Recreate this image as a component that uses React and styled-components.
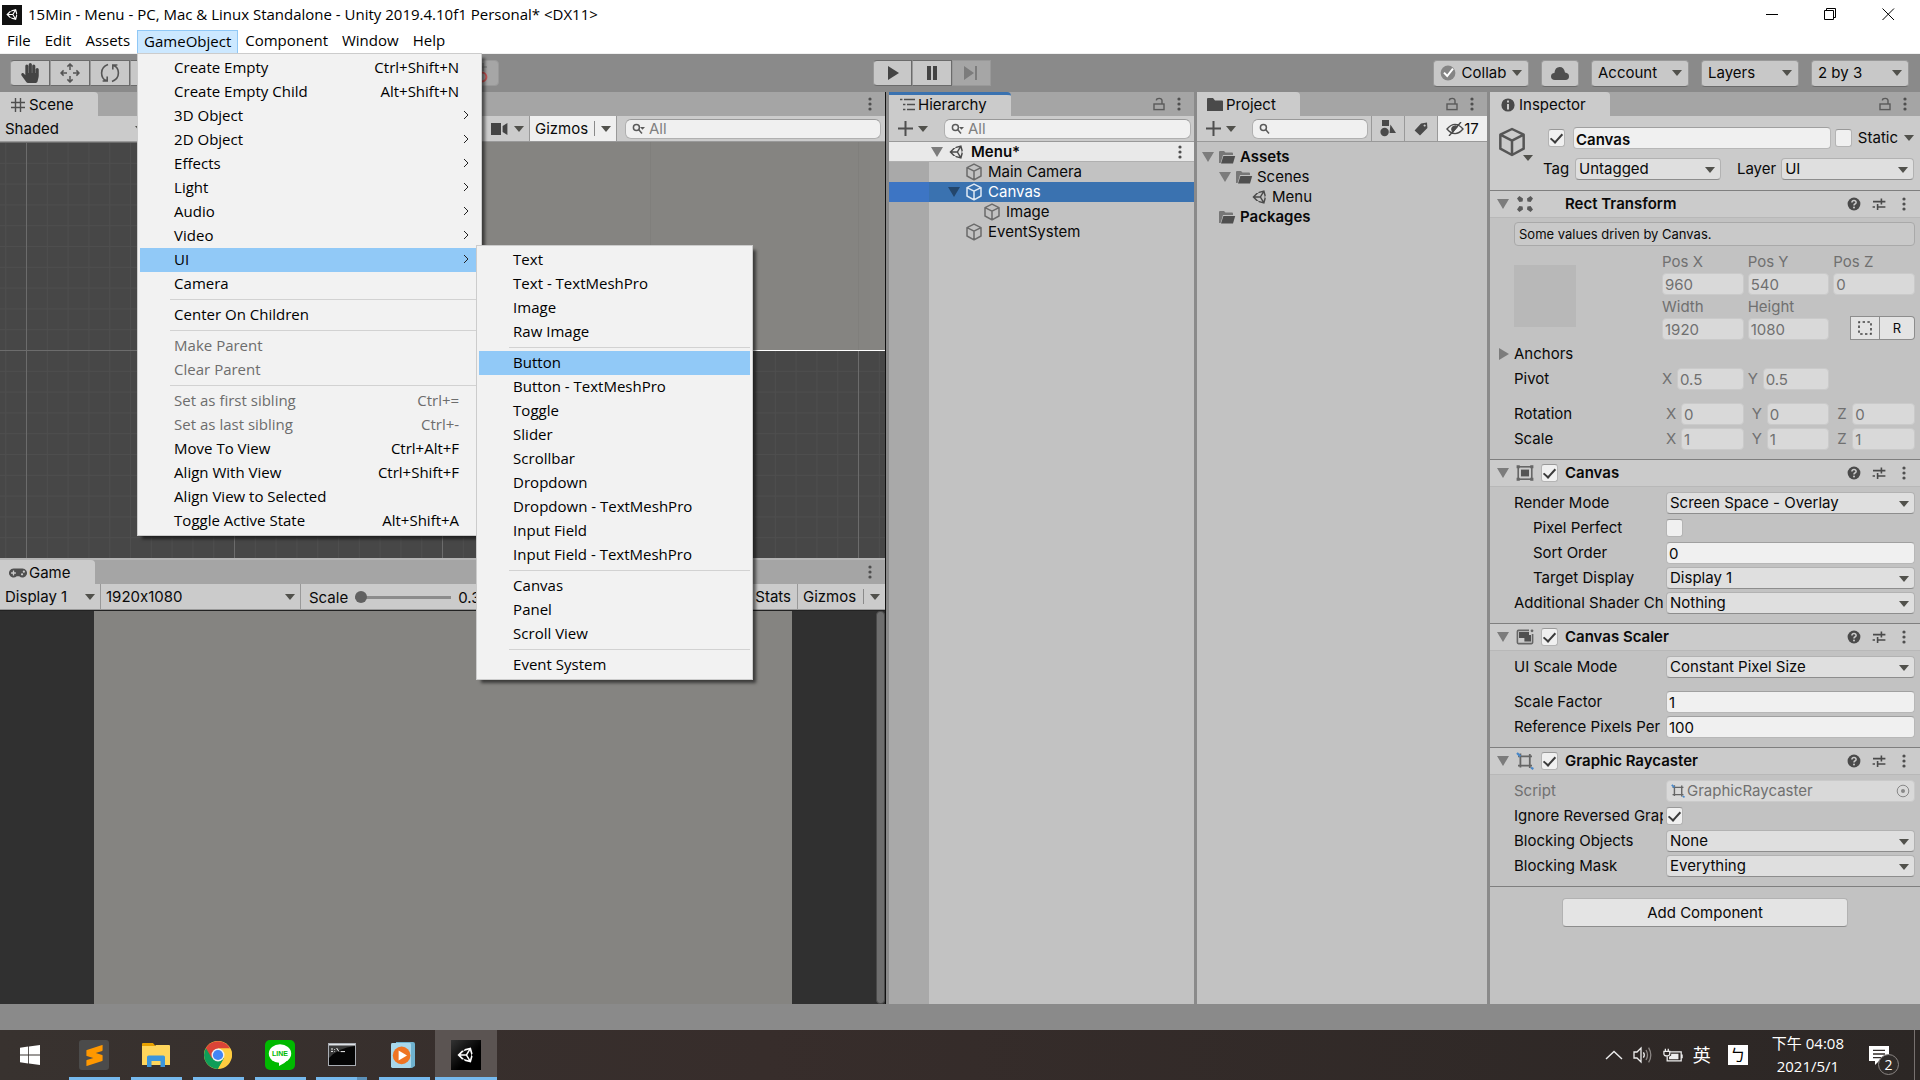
import React from 'react';
import styled, { createGlobalStyle, css } from 'styled-components';
import { FaUnity, FaHandPaper, FaGamepad } from 'react-icons/fa';
import { SiSublimetext } from 'react-icons/si';

const hierarchyRows = [
    { name: 'Main Camera', depth: 0 },
    { name: 'Canvas', depth: 0, open: true, selected: true },
    { name: 'Image', depth: 1 },
    { name: 'EventSystem', depth: 0 },
];

const gameObjectMenu = [
    { label: 'Create Empty', keys: 'Ctrl+Shift+N' },
    { label: 'Create Empty Child', keys: 'Alt+Shift+N' },
    { label: '3D Object', sub: true },
    { label: '2D Object', sub: true },
    { label: 'Effects', sub: true },
    { label: 'Light', sub: true },
    { label: 'Audio', sub: true },
    { label: 'Video', sub: true },
    { label: 'UI', sub: true, active: true },
    { label: 'Camera' },
    null,
    { label: 'Center On Children' },
    null,
    { label: 'Make Parent', disabled: true },
    { label: 'Clear Parent', disabled: true },
    null,
    { label: 'Set as first sibling', keys: 'Ctrl+=', disabled: true },
    { label: 'Set as last sibling', keys: 'Ctrl+-', disabled: true },
    { label: 'Move To View', keys: 'Ctrl+Alt+F' },
    { label: 'Align With View', keys: 'Ctrl+Shift+F' },
    { label: 'Align View to Selected' },
    { label: 'Toggle Active State', keys: 'Alt+Shift+A' },
];

const uiMenu = [
    'Text', 'Text - TextMeshPro', 'Image', 'Raw Image', null,
    'Button', 'Button - TextMeshPro', 'Toggle', 'Slider', 'Scrollbar', 'Dropdown',
    'Dropdown - TextMeshPro', 'Input Field', 'Input Field - TextMeshPro', null,
    'Canvas', 'Panel', 'Scroll View', null,
    'Event System',
];

/* ---------- icons ---------- */

const CubeIcon = ({ size = 18, color = '#6b6b6b' }) => (
    <svg width={size} height={size} viewBox="0 0 18 18" fill="none" stroke={color} strokeWidth="1.5" strokeLinejoin="round">
        <path d="M9 1.2 16 4.6V13L9 16.8 2 13V4.6ZM2 4.6 9 8.2 16 4.6M9 8.2V16.8" />
    </svg>
);

const FolderIcon = () => (
    <svg width="18" height="16" viewBox="0 0 18 16">
        <path d="M1 14V3q0-1 1-1h4l1.5 1.5H14q1 0 1 1V6H5L2.6 14Z" fill="#777" />
        <path d="M5.4 7H17.2L15 14.4H3Z" fill="#4f4f4f" />
    </svg>
);

const DotsIcon = () => (
    <svg width="4" height="14" viewBox="0 0 4 14" fill="#4f4f4f">
        <circle cx="2" cy="2" r="1.6" /><circle cx="2" cy="7" r="1.6" /><circle cx="2" cy="12" r="1.6" />
    </svg>
);

const LockIcon = () => (
    <svg width="12" height="14" viewBox="0 0 12 14" fill="none" stroke="#5a5a5a" strokeWidth="1.4">
        <rect x="1" y="7" width="10" height="5.6" />
        <path d="M9 7V3.6Q9 1.4 6.2 1.4T3.4 3.4" />
    </svg>
);

const SearchIcon = ({ menu }) => (
    <svg width="14" height="12" viewBox="0 0 14 12" fill="none" stroke="#5a5a5a" strokeWidth="1.5">
        <circle cx="4.4" cy="4.4" r="3" />
        <path d="M6.6 6.6 10 10.4" />
        {menu && <path d="M8 4h5L10.5 6.8Z" fill="#5a5a5a" stroke="none" />}
    </svg>
);

const PlusIcon = () => (
    <svg width="15" height="15" viewBox="0 0 15 15" stroke="#4f4f4f" strokeWidth="2">
        <path d="M7.5 0V15M0 7.5H15" />
    </svg>
);

const MoveIcon = () => (
    <svg width="20" height="20" viewBox="0 0 20 20" fill="none" stroke="#555" strokeWidth="1.5">
        <path d="M10 1V7M10 13V19M1 10H7M13 10H19M7.4 3.6 10 1 12.6 3.6M7.4 16.4 10 19 12.6 16.4M3.6 7.4 1 10 3.6 12.6M16.4 7.4 19 10 16.4 12.6" />
    </svg>
);

const RotateIcon = () => (
    <svg width="20" height="20" viewBox="0 0 20 20" fill="none" stroke="#555" strokeWidth="1.6">
        <path d="M8 1.6Q1.6 4 1.6 10T6.4 17.6M2.6 18H7.2V13.4M12 18.4Q18.4 16 18.4 10T13.6 2.4M17.4 2H12.8V6.6" />
    </svg>
);

const HelpIcon = () => (
    <svg width="14" height="14" viewBox="0 0 14 14">
        <circle cx="7" cy="7" r="6.4" fill="#4a4a4a" />
        <path d="M4.9 5.5Q5 3.6 7 3.6T9.1 5.4Q9.1 6.4 7.9 7 7 7.5 7 8.4" fill="none" stroke="#cbcbcb" strokeWidth="1.5" />
        <circle cx="7" cy="10.5" r="1" fill="#cbcbcb" />
    </svg>
);

const PresetIcon = () => (
    <svg width="14" height="14" viewBox="0 0 14 14" stroke="#4a4a4a" strokeWidth="1.6">
        <path d="M1 4.6H9M9.4 1.4V7.6M9.4 4.6H13.4M0.6 10H3M5.6 7V13M5.6 10H13.4" />
    </svg>
);

const RectTransformIcon = () => (
    <svg width="18" height="18" viewBox="0 0 18 18" fill="#5a5a5a">
        <path d="M1 3.4 3.4 1 7 3.4 6.6 6.6 3.4 7ZM17 3.4 14.6 1 11 3.4 11.4 6.6 14.6 7ZM1 14.6 3.4 17 7 14.6 6.6 11.4 3.4 11ZM17 14.6 14.6 17 11 14.6 11.4 11.4 14.6 11Z" />
    </svg>
);

const CanvasIcon = () => (
    <svg width="18" height="16" viewBox="0 0 18 16" fill="none" stroke="#666" strokeWidth="1.6">
        <rect x="2.2" y="1.8" width="13.6" height="12.4" />
        <rect x="5" y="4.6" width="8" height="6.8" fill="#555" stroke="none" />
        <path d="M0.6 1.8h3.2M14.2 1.8h3.2M0.6 14.2h3.2M14.2 14.2h3.2" strokeWidth="3" />
    </svg>
);

const ScalerIcon = () => (
    <svg width="18" height="16" viewBox="0 0 18 16">
        <path d="M13 1.4H2.4q-1 0-1 1V13.6q0 1 1 1H15.6q1 0 1-1V5" fill="none" stroke="#666" strokeWidth="1.6" />
        <path d="M3 3H13V6H15V12.6H8.4V9H3Z" fill="#4f4f4f" />
        <circle cx="16" cy="1.8" r="1.4" fill="#666" />
    </svg>
);

const RaycasterIcon = ({ size = 18 }) => (
    <svg width={size} height={size} viewBox="0 0 18 18" fill="none" stroke="#666" strokeWidth="1.8">
        <path d="M4.4 1.6V15.4M13.8 2V16M2 4.4H16M2 13.6H16" />
        <path d="M1 1 4.4 4.4M15 15.6 17.4 17" stroke="#4a88c8" strokeWidth="2.2" />
    </svg>
);

const UnityMark = ({ size = 16, color = '#4a4a4a' }) => <FaUnity size={size} color={color} />;

/* ---------- shared parts ---------- */

const Select = ({ id, value, grow }) => (
    <SelectBox $grow={grow}>
        <select id={id} defaultValue={value}>
            <option>{value}</option>
        </select>
    </SelectBox>
);

const TabBar = ({ icon, title, focused, lock }) => (
    <Tabs>
        <Tab $focused={focused}><TabIcon>{icon}</TabIcon>{title}</Tab>
        <TabTools>
            {lock && <LockIcon />}
            <DotsIcon />
        </TabTools>
    </Tabs>
);

const Component = ({ icon, title, toggle, children }) => (
    <section>
        <ComponentHeader>
            <Triangle $big $dim />
            <IconSlot>{icon}</IconSlot>
            <CheckSlot>
                {toggle && <CheckBox type="checkbox" defaultChecked aria-label={title} />}
            </CheckSlot>
            <ComponentTitle>{title}</ComponentTitle>
            <HeaderTools>
                <HelpIcon />
                <PresetIcon />
                <DotsIcon />
            </HeaderTools>
        </ComponentHeader>
        <ComponentBody>{children}</ComponentBody>
    </section>
);

const Property = ({ id, label, indent, muted, gap, children }) => (
    <PropertyRow $gap={gap}>
        <PropertyLabel htmlFor={id} $indent={indent} $muted={muted}>{label}</PropertyLabel>
        {children}
    </PropertyRow>
);

const RectField = ({ label, value }) => (
    <RectLabel>
        <span>{label}</span>
        <TextField disabled defaultValue={value} />
    </RectLabel>
);

const VectorRow = ({ label, axes, value, wide, gap }) => (
    <VectorGrid $gap={gap}>
        <span>{label}</span>
        {axes.map(axis => (
            <AxisField key={axis} $wide={wide}>
                {axis}
                <TextField disabled defaultValue={value} />
            </AxisField>
        ))}
    </VectorGrid>
);

const GameObjectMenu = () => (
    <Menu $main>
        {gameObjectMenu.map((item, i) => item === null ? <MenuLine key={i} /> : (
            <MenuCell key={item.label}>
                <MenuItem disabled={item.disabled} $active={item.active}>
                    {item.label}
                    {item.keys && <span>{item.keys}</span>}
                    {item.sub && (
                        <MenuArrow viewBox="0 0 6 10"><path d="M1 1 5 5 1 9" /></MenuArrow>
                    )}
                </MenuItem>
                {item.active && (
                    <Menu>
                        {uiMenu.map((name, n) => name === null ? <MenuLine key={n} /> : (
                            <MenuItem key={name} $active={name === 'Button'}>{name}</MenuItem>
                        ))}
                    </Menu>
                )}
            </MenuCell>
        ))}
    </Menu>
);

/* ---------- panels ---------- */

const ScenePanel = () => (
    <Panel>
        <TabBar title="Scene" icon={
            <svg width="14" height="14" viewBox="0 0 14 14" stroke="#4f4f4f" strokeWidth="1.4"><path d="M4.5 0V14M9.5 0V14M0 4.5H14M0 9.5H14" /></svg>
        } />
        <Toolbar>
            <ToolbarDrop $width="150px">Shaded<Triangle /></ToolbarDrop>
            <Spacer />
            <ToolbarDrop $width="43px">
                <svg width="17" height="12" viewBox="0 0 17 12" fill="#444"><path d="M0 0H10V12H0ZM11.6 3 16.4 0V12L11.6 9Z" /></svg>
                <Triangle />
            </ToolbarDrop>
            <GizmosButton $on>Gizmos<Split><Triangle /></Split></GizmosButton>
            <SceneSearch><SearchIcon menu /><input placeholder="All" aria-label="Search scene" /></SceneSearch>
        </Toolbar>
        <SceneView>
            <svg width="100%" height="100%">
                <defs>
                    <pattern id="minor" x="26" y="0" width="20.8" height="20.8" patternUnits="userSpaceOnUse">
                        <path d="M0.5 0V20.8M0 0.5H20.8" stroke="#4e4e4e" />
                    </pattern>
                    <pattern id="major" x="26" y="0" width="208" height="208" patternUnits="userSpaceOnUse">
                        <path d="M0.5 0V208M0 0.5H208" stroke="#6c6c6c" />
                    </pattern>
                </defs>
                <rect width="100%" height="100%" fill="url(#minor)" />
                <rect width="100%" height="100%" fill="url(#major)" />
                <rect x="234" width="100%" height="208" fill="#858481" />
                <path d="M650.5 0V208M858.5 0V208" stroke="#807f7c" />
                <path d="M234 208.5H4000" stroke="#fff" />
            </svg>
        </SceneView>
    </Panel>
);

const GamePanel = () => (
    <Panel>
        <TabBar title="Game" icon={<FaGamepad size={18} color="#4f4f4f" />} />
        <Toolbar>
            <ToolbarDrop $width="101px" $line>Display 1<Triangle /></ToolbarDrop>
            <ToolbarDrop $width="200px" $line>1920x1080<Triangle /></ToolbarDrop>
            <ScaleLabel>Scale<ScaleRange type="range" min="0" max="100" defaultValue="0" />0.36x</ScaleLabel>
            <Spacer />
            <StatsButton>Stats</StatsButton>
            <GizmosButton>Gizmos<Split><Triangle /></Split></GizmosButton>
        </Toolbar>
        <GameView>
            <GameImage />
            <GameScroll />
        </GameView>
    </Panel>
);

const HierarchyPanel = () => (
    <Panel>
        <TabBar focused lock title="Hierarchy" icon={
            <svg width="15" height="13" viewBox="0 0 15 13" stroke="#4f4f4f" strokeWidth="1.4"><path d="M0 1.5H2.4M4 1.5H15M3 6.5H5.4M7 6.5H15M3 11.5H5.4M7 11.5H15" /></svg>
        } />
        <Toolbar>
            <AddButton aria-label="Create"><PlusIcon /><Triangle /></AddButton>
            <Search><SearchIcon menu /><input placeholder="All" aria-label="Search hierarchy" /></Search>
        </Toolbar>
        <SceneRow>
            <Triangle $big $dim />
            <UnityMark />
            <b>Menu*</b>
            <DotsIcon />
        </SceneRow>
        <Tree>
            {hierarchyRows.map(row => (
                <TreeRow key={row.name} $selected={row.selected} $depth={row.depth}>
                    <ArrowSlot>{row.open && <Triangle $big $navy />}</ArrowSlot>
                    <CubeIcon color={row.selected ? '#dfe9f4' : undefined} />
                    {row.name}
                </TreeRow>
            ))}
        </Tree>
    </Panel>
);

const ProjectPanel = () => (
    <Panel>
        <TabBar lock title="Project" icon={
            <svg width="16" height="13" viewBox="0 0 16 13" fill="#4a4a4a"><path d="M0 13V1Q0 0 1 0H6L8 2.4H15Q16 2.4 16 3.4V13Z" /></svg>
        } />
        <Toolbar>
            <AddButton aria-label="Create"><PlusIcon /><Triangle /></AddButton>
            <Search><SearchIcon /><input aria-label="Search project" /></Search>
            <FilterButton aria-label="Search by type">
                <svg width="16" height="17" viewBox="0 0 16 17" fill="#4a4a4a"><path d="M2 0H9V6H2ZM10.4 4.4 16 13H9.6Z" /><circle cx="4.6" cy="12" r="4.2" /></svg>
            </FilterButton>
            <FilterButton aria-label="Search by label">
                <svg width="14" height="14" viewBox="0 0 14 14" fill="#4a4a4a"><path d="M7 1.4 13 0.6 13.4 6 6 13.6 0.6 8.4ZM10.6 2.4a1.1 1.1 0 1 0 .1 0Z" fillRule="evenodd" /></svg>
            </FilterButton>
            <HiddenButton>
                <svg width="18" height="14" viewBox="0 0 18 14" fill="none" stroke="#4a4a4a" strokeWidth="1.4">
                    <path d="M1 7Q5 2.4 9 2.4T17 7Q13 11.6 9 11.6T1 7ZM15 0 3 14" />
                    <path d="M7 9.6 11 4.8A3 3 0 0 0 7 9.6Z" fill="#4a4a4a" />
                </svg>
                17
            </HiddenButton>
        </Toolbar>
        <Files>
            <FileRow $depth={0}><ArrowSlot><Triangle $big $dim /></ArrowSlot><FolderIcon /><b>Assets</b></FileRow>
            <FileRow $depth={1}><ArrowSlot><Triangle $big $dim /></ArrowSlot><FolderIcon />Scenes</FileRow>
            <FileRow $depth={2}><ArrowSlot /><UnityMark />Menu</FileRow>
            <FileRow $depth={0}><ArrowSlot /><FolderIcon /><b>Packages</b></FileRow>
        </Files>
    </Panel>
);

const InspectorPanel = () => (
    <Panel>
        <TabBar lock title="Inspector" icon={
            <svg width="14" height="14" viewBox="0 0 14 14"><circle cx="7" cy="7" r="6.6" fill="#4a4a4a" /><path d="M7 2.6V4.6M7 6V11.4" stroke="#cbcbcb" strokeWidth="2" /></svg>
        } />
        <ObjectHeader>
            <ObjectIcon><CubeIcon size={30} color="#555" /><Triangle /></ObjectIcon>
            <ObjectFields>
                <ObjectRow>
                    <CheckBox type="checkbox" defaultChecked aria-label="Active" />
                    <NameField aria-label="Name" defaultValue="Canvas" />
                    <StaticLabel><CheckBox type="checkbox" />Static<Triangle /></StaticLabel>
                </ObjectRow>
                <ObjectRow>
                    <TagLabel htmlFor="tag">Tag</TagLabel>
                    <Select id="tag" value="Untagged" grow={145} />
                    <LayerLabel htmlFor="layer">Layer</LayerLabel>
                    <Select id="layer" value="UI" grow={132} />
                </ObjectRow>
            </ObjectFields>
        </ObjectHeader>

        <Component title="Rect Transform" icon={<RectTransformIcon />}>
            <HelpBox>Some values driven by Canvas.</HelpBox>
            <RectGrid>
                <AnchorPreview />
                <RectField label="Pos X" value="960" />
                <RectField label="Pos Y" value="540" />
                <RectField label="Pos Z" value="0" />
                <RectField label="Width" value="1920" />
                <RectField label="Height" value="1080" />
                <ModeButtons>
                    <button aria-label="Blueprint mode">
                        <svg width="14" height="14" viewBox="0 0 14 14" fill="none" stroke="#444" strokeWidth="1.6"><rect x="1" y="1" width="12" height="12" strokeDasharray="2.4 2.4" strokeDashoffset="1.2" /></svg>
                    </button>
                    <button>R</button>
                </ModeButtons>
            </RectGrid>
            <Foldout><Triangle $big $right $dim />Anchors</Foldout>
            <VectorRow label="Pivot" axes={['X', 'Y']} value="0.5" wide />
            <VectorRow label="Rotation" axes={['X', 'Y', 'Z']} value="0" gap />
            <VectorRow label="Scale" axes={['X', 'Y', 'Z']} value="1" />
        </Component>

        <Component title="Canvas" toggle icon={<CanvasIcon />}>
            <Property id="mode" label="Render Mode"><Select id="mode" value="Screen Space - Overlay" /></Property>
            <Property id="pixel" label="Pixel Perfect" indent><CheckBox id="pixel" type="checkbox" /></Property>
            <Property id="order" label="Sort Order" indent><TextField id="order" defaultValue="0" /></Property>
            <Property id="display" label="Target Display" indent><Select id="display" value="Display 1" /></Property>
            <Property id="shader" label="Additional Shader Channels"><Select id="shader" value="Nothing" /></Property>
        </Component>

        <Component title="Canvas Scaler" toggle icon={<ScalerIcon />}>
            <Property id="uiscale" label="UI Scale Mode"><Select id="uiscale" value="Constant Pixel Size" /></Property>
            <Property id="factor" label="Scale Factor" gap><TextField id="factor" defaultValue="1" /></Property>
            <Property id="ppu" label="Reference Pixels Per Unit"><TextField id="ppu" defaultValue="100" /></Property>
        </Component>

        <Component title="Graphic Raycaster" toggle icon={<RaycasterIcon />}>
            <Property id="script" label="Script" muted>
                <ScriptField>
                    <RaycasterIcon size={14} />
                    <input id="script" disabled defaultValue="GraphicRaycaster" />
                    <svg width="14" height="14" viewBox="0 0 14 14"><circle cx="7" cy="7" r="5.8" fill="none" stroke="#888" /><circle cx="7" cy="7" r="2" fill="#888" /></svg>
                </ScriptField>
            </Property>
            <Property id="reversed" label="Ignore Reversed Graphics"><CheckBox id="reversed" type="checkbox" defaultChecked /></Property>
            <Property id="objects" label="Blocking Objects"><Select id="objects" value="None" /></Property>
            <Property id="mask" label="Blocking Mask"><Select id="mask" value="Everything" /></Property>
        </Component>
        <AddComponent>
            <button>Add Component</button>
        </AddComponent>
    </Panel>
);

const MainToolbar = () => (
    <TopTools>
        <ToolSet>
            <ToolButton aria-label="Hand"><FaHandPaper size={20} color="#444" /></ToolButton>
            <ToolButton aria-label="Move"><MoveIcon /></ToolButton>
            <ToolButton aria-label="Rotate"><RotateIcon /></ToolButton>
            <ToolButton aria-label="Scale" />
            <ToolButton aria-label="Rect" />
            <SnapButton aria-label="Snap" disabled>
                <svg width="20" height="20" viewBox="0 0 20 20" fill="none" strokeWidth="2">
                    <path d="M14 0V8M10 4H18" stroke="#777" strokeWidth="1.2" />
                    <circle cx="13" cy="14" r="4.4" stroke="#c55" />
                </svg>
            </SnapButton>
        </ToolSet>
        <PlaySet>
            <ToolButton aria-label="Play"><svg width="12" height="14" viewBox="0 0 12 14" fill="#444"><path d="M1 0 12 7 1 14Z" /></svg></ToolButton>
            <ToolButton aria-label="Pause"><svg width="10" height="14" viewBox="0 0 10 14" fill="#444"><path d="M0 0H4V14H0ZM6 0H10V14H6Z" /></svg></ToolButton>
            <ToolButton aria-label="Step" disabled><svg width="14" height="14" viewBox="0 0 14 14" fill="#7c7c7c"><path d="M0 0 10 7 0 14ZM11 0H13V14H11Z" /></svg></ToolButton>
        </PlaySet>
        <RightSet>
            <DropButton $width="96px">
                <svg width="16" height="16" viewBox="0 0 16 16"><circle cx="8" cy="8" r="7.4" fill="#858585" /><path d="M4 7.6 7.2 11 13 3.6" fill="none" stroke="#fff" strokeWidth="2" /></svg>
                Collab<Triangle />
            </DropButton>
            <DropButton $width="38px" aria-label="Services">
                <svg width="18" height="13" viewBox="0 0 18 13" fill="#4f4f4f"><path d="M4 13Q0 13 0 9.6T3.4 6Q4 0 8.6 0T14 5.6Q18 6 18 9.4T14.4 13Z" /></svg>
            </DropButton>
            <DropButton $width="98px">Account<Triangle /></DropButton>
            <DropButton $width="98px">Layers<Triangle /></DropButton>
            <DropButton $width="98px">2 by 3<Triangle /></DropButton>
        </RightSet>
    </TopTools>
);

const Taskbar = () => (
    <Bar>
        <StartButton aria-label="Start">
            <svg width="20" height="20" viewBox="0 0 20 20" fill="#fff"><path d="M0 2.8 8.2 1.6V9.5H0ZM9 1.5 20 0V9.5H9ZM0 10.4H8.2V18.4L0 17.2ZM9 10.4H20V20L9 18.5Z" /></svg>
        </StartButton>
        <Task aria-label="Sublime Text"><SublimeTile><SiSublimetext size={21} color="#ff9800" /></SublimeTile></Task>
        <Task aria-label="Explorer">
            <svg width="28" height="24" viewBox="0 0 28 24">
                <path d="M0 1Q0 0 1 0H11L13.5 3H0Z" fill="#e8a200" />
                <path d="M0 3H13L14 2H27Q28 2 28 3V22H0Z" fill="#ffd65c" />
                <path d="M5 24V14Q5 12.4 6.6 12.4H21.4Q23 12.4 23 14V24H18.5V18H9.5V24Z" fill="#3c96dc" />
            </svg>
        </Task>
        <Task aria-label="Chrome">
            <svg width="28" height="28" viewBox="0 0 28 28">
                <circle cx="14" cy="14" r="14" fill="#ffcd40" />
                <path d="M14 14 1.9 7A14 14 0 0 0 14 28L20 17.5Z" fill="#0f9d58" />
                <path d="M14 14 8 17.5 1.9 7A14 14 0 0 1 26.2 7.4H14Z" fill="#db4437" />
                <path d="M14 7.4H26.2Q28.4 11 27.9 15.6T14 28L20 17.5Z" fill="#ffcd40" />
                <circle cx="14" cy="14" r="6.5" fill="#f1f1f1" />
                <circle cx="14" cy="14" r="5.1" fill="#4285f4" />
            </svg>
        </Task>
        <Task aria-label="LINE">
            <svg width="30" height="30" viewBox="0 0 30 30">
                <rect width="30" height="30" rx="5" fill="#00b900" />
                <ellipse cx="15" cy="13.6" rx="11.2" ry="9.4" fill="#fff" />
                <path d="M14 21V26Q20 23.4 23.6 19Z" fill="#fff" />
                <text x="15" y="16.4" textAnchor="middle" fontFamily="Liberation Sans" fontWeight="bold" fontSize="7" fill="#00b900">LINE</text>
            </svg>
        </Task>
        <Task aria-label="Command Prompt" $stacked>
            <svg width="28" height="24" viewBox="0 0 28 24">
                <rect x="0.5" y="0.5" width="27" height="22" fill="#050505" stroke="#a9adb3" />
                <path d="M1 1H27V2.6H1Z" fill="#dfe2e6" />
                <path d="M1 3H27Q10 5 1 15Z" fill="#3a3a3a" />
                <path d="M3 6H5M3 8.4H5M6.6 6V6.8M6.6 8V8.6M8.6 5 11 8.6M12.6 8.6H17" stroke="#eee" fill="none" />
            </svg>
        </Task>
        <Task aria-label="Media Player">
            <svg width="26" height="26" viewBox="0 0 26 26">
                <path d="M5 0H22Q24 0 24 2V24L21 26H5Z" fill="#6fb2cf" />
                <rect y="1" width="20" height="25" rx="1.4" fill="#a9d8ec" />
                <circle cx="10.6" cy="13.4" r="8.8" fill="#ef7423" />
                <path d="M7.6 8.4 16 13.4 7.6 18.4Z" fill="#fff" />
            </svg>
        </Task>
        <Task aria-label="Unity" $current><UnityTile><UnityMark size={18} color="#fff" /></UnityTile></Task>
        <Spacer />
        <Tray>
            <svg width="18" height="10" viewBox="0 0 18 10" fill="none" stroke="#eee" strokeWidth="1.4"><path d="M1 9 9 1.4 17 9" /></svg>
            <svg width="20" height="18" viewBox="0 0 20 18" fill="none" stroke="#eee" strokeWidth="1.3">
                <path d="M1 6H4L8 2V16L4 12H1ZM10.4 6.4Q12.2 9 10.4 11.6" />
                <path d="M13 4Q16 9 13 14M15.6 1.6Q20 9 15.6 16.4" stroke="#8a8583" />
            </svg>
            <svg width="20" height="15" viewBox="0 0 22 16" fill="none" stroke="#eee" strokeWidth="1.4">
                <path d="M8 4H20V14H4.6V9M1 3.4H7.4V6.4Q7.4 8.4 4.2 8.4T1 6.4ZM2.6 3.4V0.6M5.8 3.4V0.6M21 7V11" />
                <path d="M9 6H17V12H6.6V9.4L9 8Z" fill="#eee" stroke="none" />
            </svg>
            <Language>英</Language>
            <ImeTile>ㄅ</ImeTile>
            <Clock><span>下午 04:08</span><span>2021/5/1</span></Clock>
            <Notice>
                <svg width="20" height="19" viewBox="0 0 20 19"><path d="M0 0H20V15H10L6 19V15H0Z" fill="#fff" /><path d="M4 4.4H16M4 8H16M4 11.6H12" stroke="#332c29" strokeWidth="1.3" /></svg>
                <Badge>2</Badge>
            </Notice>
        </Tray>
    </Bar>
);

const App = () => (
    <>
        <GlobalStyle />
        <Desktop>
            <TitleBar>
                <AppIcon><UnityMark size={13} color="#fff" /></AppIcon>
                <WindowTitle>15Min - Menu - PC, Mac &amp; Linux Standalone - Unity 2019.4.10f1 Personal* &lt;DX11&gt;</WindowTitle>
                <WindowButton aria-label="Minimize"><svg width="13" height="13" viewBox="0 0 13 13"><path d="M0 6.5H12" /></svg></WindowButton>
                <WindowButton aria-label="Restore"><svg width="13" height="13" viewBox="0 0 13 13"><path d="M0.5 2.5H9.5V11.5H0.5ZM2.5 2.5V0.5H11.5V9.5H9.5" /></svg></WindowButton>
                <WindowButton aria-label="Close"><svg width="13" height="13" viewBox="0 0 13 13"><path d="M0.5 0.5 12 12M12 0.5 0.5 12" /></svg></WindowButton>
            </TitleBar>
            <MenuBar>
                <MenuTitle>File</MenuTitle>
                <MenuTitle>Edit</MenuTitle>
                <MenuTitle>Assets</MenuTitle>
                <MenuCell>
                    <MenuTitle $open>GameObject</MenuTitle>
                    <GameObjectMenu />
                </MenuCell>
                <MenuTitle>Component</MenuTitle>
                <MenuTitle>Window</MenuTitle>
                <MenuTitle>Help</MenuTitle>
            </MenuBar>
            <MainToolbar />
            <Workspace>
                <Views>
                    <ScenePanel />
                    <GamePanel />
                </Views>
                <HierarchyPanel />
                <ProjectPanel />
                <InspectorPanel />
            </Workspace>
            <StatusBar />
            <Taskbar />
        </Desktop>
    </>
);

export default App;

const editorFont = css`
    font-family: Inter, 'Liberation Sans', sans-serif;
    font-size: 15px;
    line-height: 20px;
    font-feature-settings: 'calt' 0;
`;

const windowsFont = css`
    font-family: 'Open Sans', 'Noto Sans CJK TC', sans-serif;
    font-size: 15px;
    line-height: 24px;
`;

const GlobalStyle = createGlobalStyle`
    * {
        box-sizing: border-box;
    }
    body {
        margin: 0;
        background: #8a8a8a;
    }
    button, input, select {
        font: inherit;
        font-feature-settings: inherit;
        color: inherit;
        margin: 0;
        padding: 0;
        border: 0;
        border-radius: 0;
        background: none;
        outline: none;
    }
    button {
        white-space: nowrap;
    }
    svg {
        flex: none;
        display: block;
    }
`;

const Desktop = styled.div`
    ${editorFont}
    min-height: 100vh;
    display: flex;
    flex-direction: column;
    color: #090909;
    overflow: hidden;
`;

const Spacer = styled.div`
    flex: 1;
`;

const Triangle = styled.i`
    flex: none;
    width: 0;
    height: 0;
    border: solid transparent;
    border-width: ${({ $big }) => ($big ? '10px 6px 0' : '6px 5px 0')};
    border-top-color: ${({ $dim, $navy }) => ($navy ? '#23466c' : $dim ? '#7c7c7c' : '#51514c')};
    ${({ $right }) => $right && css`
        border-width: 6px 0 6px 10px;
        border-color: transparent transparent transparent #7c7c7c;
    `}
`;

/* window chrome */

const TitleBar = styled.header`
    ${windowsFont}
    display: flex;
    align-items: center;
    height: 29px;
    padding: 0 3px 0 2px;
    background: #fff;
    color: #000;
`;

const AppIcon = styled.span`
    display: grid;
    place-items: center;
    width: 20px;
    height: 20px;
    background: #111;
`;

const WindowTitle = styled.span`
    flex: 1;
    padding: 0 0 2px 6px;
    white-space: nowrap;
`;

const WindowButton = styled.button`
    display: grid;
    place-items: center;
    width: 58px;
    height: 29px;

    path {
        fill: none;
        stroke: #000;
    }
`;

const MenuBar = styled.nav`
    ${windowsFont}
    display: flex;
    height: 25px;
    background: #fff;
    border-bottom: 1px solid #f0f0f0;
    color: #000;
`;

const MenuCell = styled.div`
    position: relative;
`;

const MenuTitle = styled.button`
    height: 24px;
    line-height: 20px;
    padding: 0 6px 2px;
    border: 1px solid ${({ $open }) => ($open ? '#90c8f6' : 'transparent')};
    background: ${({ $open }) => ($open ? '#cce8ff' : 'transparent')};
`;

const Menu = styled.div`
    position: absolute;
    z-index: 10;
    top: ${({ $main }) => ($main ? '100%' : '-3px')};
    left: ${({ $main }) => ($main ? '0' : 'calc(100% - 3px)')};
    width: ${({ $main }) => ($main ? '345px' : '277px')};
    padding: 2px;
    border: 1px solid #ccc;
    background: #f2f2f2;
    box-shadow: 4px 4px 3px -1px rgba(0, 0, 0, 0.55);
`;

const MenuItem = styled.button`
    display: flex;
    justify-content: space-between;
    align-items: center;
    width: 100%;
    height: 24px;
    padding: 0 20px 2px 34px;
    text-align: left;
    color: ${({ disabled }) => (disabled ? '#6d6d6d' : '#000')};
    background: ${({ $active }) => ($active ? '#91c9f7' : 'transparent')};
`;

const MenuArrow = styled.svg`
    width: 6px;
    height: 10px;
    margin-right: -10px;
    fill: none;
    stroke: #222;
`;

const MenuLine = styled.hr`
    height: 1px;
    margin: 3px 0 3px 30px;
    border: 0;
    background: #d2d2d2;
`;

/* editor toolbar */

const TopTools = styled.div`
    display: grid;
    grid-template-columns: 873fr 118px 929fr;
    align-items: center;
    height: 38px;
    background: #8a8a8a;
`;

const ToolSet = styled.div`
    display: flex;
    padding-left: 10px;
`;

const ToolButton = styled.button`
    display: grid;
    place-items: center;
    width: 40px;
    height: 26px;
    border: 1px solid #6b6b6b;
    border-left-color: #999;
    background: ${({ disabled }) => (disabled ? '#a6a6a6' : '#c8c8c8')};
    ${({ disabled }) => disabled && 'border-color: #999;'}

    &:first-child {
        border-radius: 4px 0 0 4px;
    }
`;

const SnapButton = styled(ToolButton)`
    margin-left: 249px;
    border-radius: 0 4px 4px 0;
`;

const PlaySet = styled.div`
    display: grid;
    grid-template-columns: repeat(3, 1fr);

    ${ToolButton} {
        width: auto;
    }
`;

const RightSet = styled.div`
    display: flex;
    justify-content: flex-end;
    gap: 12px;
    padding-right: 11px;
`;

const DropButton = styled.button`
    display: flex;
    align-items: center;
    justify-content: ${({ $width }) => ($width === '38px' ? 'center' : 'space-between')};
    width: ${({ $width }) => $width};
    height: 27px;
    padding: 0 6px;
    border: 1px solid #999;
    border-bottom-color: #6b6b6b;
    border-radius: 4px;
    background: #c8c8c8;
`;

/* dock layout */

const Workspace = styled.main`
    flex: 1;
    display: grid;
    grid-template-columns: 886fr 305fr 290fr 430fr;
    gap: 3px;
    background: #8a8a8a;
`;

const Views = styled.div`
    display: grid;
    grid-template-rows: 466fr 444fr;
    gap: 2px;
    min-width: 0;
    border-right: 1px solid #111;
    background: #b4b4b4;
`;

const Panel = styled.section`
    display: flex;
    flex-direction: column;
    min-width: 0;
    background: #c2c2c2;
`;

const Tabs = styled.div`
    display: flex;
    justify-content: space-between;
    height: 24px;
    background: #a5a5a5;
`;

const Tab = styled.button`
    display: flex;
    align-items: center;
    gap: 1px;
    padding: 0 24px 2px 8px;
    border-top: 3px solid ${({ $focused }) => ($focused ? '#3a72b0' : '#cbcbcb')};
    border-radius: 0 4px 0 0;
    background: #cbcbcb;
`;

const TabIcon = styled.span`
    display: grid;
    place-items: center;
    width: 20px;
`;

const TabTools = styled.div`
    display: flex;
    align-items: center;
    gap: 12px;
    padding-right: 13px;
`;

const Toolbar = styled.div`
    display: flex;
    align-items: center;
    height: 26px;
    border-bottom: 1px solid #999;
    background: #cbcbcb;
`;

const ToolbarDrop = styled.button`
    display: flex;
    align-items: center;
    justify-content: space-between;
    width: ${({ $width }) => $width};
    height: 25px;
    padding: 0 5px;
    ${({ $line }) => $line && 'border-right: 1px solid #999;'}
`;

const GizmosButton = styled.button`
    display: flex;
    align-items: center;
    justify-content: space-between;
    width: 88px;
    height: 25px;
    padding: 0 5px;
    border: solid #999;
    border-width: 0 ${({ $on }) => ($on ? '1px' : '0')} 0 1px;
    background: ${({ $on }) => ($on ? '#efefef' : 'transparent')};
`;

const Split = styled.span`
    display: flex;
    align-items: center;
    height: 15px;
    padding-left: 6px;
    border-left: 1px solid #8a8a8a;
`;

const StatsButton = styled.button`
    height: 25px;
    padding: 0 6px;
`;

const Search = styled.label`
    flex: 1;
    display: flex;
    align-items: center;
    gap: 3px;
    height: 20px;
    min-width: 0;
    margin: 0 3px 0 0;
    padding: 0 6px;
    border: 1px solid #b0b0b0;
    border-top-color: #999;
    border-radius: 6px;
    background: #f0f0f0;

    input {
        flex: 1;
        min-width: 0;
        line-height: 18px;
    }
    input::placeholder {
        color: #808080;
    }
`;

const SceneSearch = styled(Search)`
    flex: none;
    width: 256px;
    margin: 0 4px 0 8px;
`;

const AddButton = styled.button`
    display: flex;
    align-items: center;
    gap: 5px;
    width: 55px;
    padding-left: 9px;
`;

const FilterButton = styled.button`
    display: grid;
    place-items: center;
    width: 33px;
    height: 25px;
    border-left: 1px solid #999;
`;

const HiddenButton = styled.button`
    display: flex;
    align-items: center;
    justify-content: center;
    width: 50px;
    height: 25px;
    border-left: 1px solid #999;
    background: #efefef;
`;

const SceneView = styled.div`
    flex: 1;
    position: relative;
    background: #474747;

    svg {
        position: absolute;
        inset: 0;
    }
`;

const ScaleLabel = styled.label`
    display: flex;
    align-items: center;
    gap: 7px;
    padding: 2px 0 0 8px;
`;

const ScaleRange = styled.input`
    appearance: none;
    width: 96px;
    height: 14px;

    &::-webkit-slider-runnable-track {
        height: 3px;
        background: #8c8c8c;
    }
    &::-webkit-slider-thumb {
        appearance: none;
        width: 12px;
        height: 12px;
        margin-top: -5px;
        border-radius: 50%;
        background: #616161;
    }
`;

const GameView = styled.div`
    flex: 1;
    display: grid;
    grid-template-columns: 94fr 698fr 84fr 9px;
    border-top: 1px solid #222;
    background: #303030;
`;

const GameImage = styled.div`
    grid-column: 2;
    background: #858481;
`;

const GameScroll = styled.div`
    grid-column: 4;
    border-radius: 4px;
    background: #6e6e6e;
    border: 1px solid #4a4a4a;
`;

/* trees */

const SceneRow = styled.div`
    display: flex;
    align-items: center;
    gap: 6px;
    height: 20px;
    padding: 0 12px 0 42px;
    border-bottom: 1px solid #b0b0b0;
    background: #e9e9e9;

    b {
        flex: 1;
        font-weight: 600;
    }
`;

const Tree = styled.div`
    flex: 1;
    background: linear-gradient(90deg, #a9a9a9 40px, #c2c2c2 40px);
`;

const TreeRow = styled.div`
    display: flex;
    align-items: center;
    gap: 5px;
    height: 20px;
    padding-left: ${({ $depth }) => 59 + $depth * 18}px;
    ${({ $selected }) => $selected && css`
        color: #fff;
        background: linear-gradient(90deg, #3d75c4 40px, #3a72b0 40px);
    `}
`;

const ArrowSlot = styled.span`
    display: flex;
    width: 12px;
`;

const Files = styled.div`
    flex: 1;
    padding-top: 5px;
`;

const FileRow = styled.div`
    display: flex;
    align-items: center;
    gap: 4px;
    height: 20px;
    padding-left: ${({ $depth }) => 5 + $depth * 17}px;

    b {
        font-weight: 600;
    }
`;

/* inspector */

const ObjectHeader = styled.div`
    display: flex;
    gap: 15px;
    padding: 11px 6px 10px 9px;
    background: #cbcbcb;
`;

const ObjectIcon = styled.div`
    display: flex;
    flex-direction: column;
    align-items: flex-end;
    width: 34px;

    svg {
        margin: 0 6px -2px 0;
    }
`;

const ObjectFields = styled.div`
    flex: 1;
    display: flex;
    flex-direction: column;
    gap: 9px;
    min-width: 0;
`;

const ObjectRow = styled.div`
    display: flex;
    align-items: center;
`;

const CheckBox = styled.input`
    appearance: none;
    display: grid;
    place-items: center;
    width: 17px;
    height: 18px;
    border: 1px solid #b4b4b4;
    border-top-color: #999;
    border-radius: 3px;
    background: #f0f0f0;

    &:checked::after {
        content: '';
        width: 5px;
        height: 10px;
        margin-top: -3px;
        border: solid #3a3a3a;
        border-width: 0 2px 2px 0;
        transform: rotate(42deg);
    }
`;

const TextField = styled.input`
    width: 100%;
    min-width: 0;
    height: 22px;
    padding: 0 2px;
    border: 1px solid #b7b7b7;
    border-top-color: #a0a0a0;
    border-radius: 4px;
    background: #f0f0f0;

    &:disabled {
        color: #707070;
        border-color: #cacaca;
        background: #d9d9d9;
    }
`;

const NameField = styled(TextField)`
    flex: 1;
    margin: 0 4px 0 8px;
    padding-top: 2px;
    font-weight: 600;
`;

const StaticLabel = styled.label`
    display: flex;
    align-items: center;
    gap: 6px;
`;

const SelectBox = styled.span`
    position: relative;
    flex: ${({ $grow }) => $grow || 1} 1 0;
    display: block;
    min-width: 0;

    select {
        appearance: none;
        display: block;
        width: 100%;
        height: 22px;
        padding: 0 20px 2px 3px;
        border: 1px solid #b2b2b2;
        border-bottom-color: #8d8d8d;
        border-radius: 4px;
        background: #dfdfdf;
    }
    &::after {
        content: '';
        position: absolute;
        right: 6px;
        top: 9px;
        border: solid transparent;
        border-width: 6px 5px 0;
        border-top-color: #51514c;
        pointer-events: none;
    }
`;

const TagLabel = styled.label`
    width: 32px;
    margin-left: -5px;
`;

const LayerLabel = styled.label`
    padding: 0 5px 0 16px;
`;

const ComponentHeader = styled.div`
    display: flex;
    align-items: center;
    gap: 7px;
    height: 28px;
    padding: 0 4px 0 7px;
    border-top: 1px solid #7f7f7f;
    border-bottom: 1px solid #b8b8b8;
    background: #cbcbcb;
`;

const HeaderTools = styled.div`
    display: grid;
    grid-template-columns: repeat(3, 25px);
    place-items: center;
`;

const IconSlot = styled.span`
    display: grid;
    place-items: center;
    width: 18px;
`;

const CheckSlot = styled.span`
    width: 17px;
`;

const ComponentTitle = styled.span`
    flex: 1;
    font-weight: 600;
`;

const ComponentBody = styled.div`
    display: flex;
    flex-direction: column;
    gap: 3px;
    padding: 5px 5px 9px 24px;
`;

const HelpBox = styled.p`
    height: 24px;
    margin: -1px 0 3px;
    padding: 0 4px;
    border: 1px solid #a9a9a9;
    border-radius: 4px;
    font-size: 13px;
    line-height: 22px;
    background: #c9c9c9;
`;

const RectGrid = styled.div`
    display: grid;
    grid-template-columns: 144px repeat(3, 1fr);
    gap: 2px 4px;
    align-items: end;
`;

const AnchorPreview = styled.div`
    grid-row: 1 / 3;
    align-self: center;
    width: 62px;
    height: 62px;
    background: #b8b8b8;
`;

const RectLabel = styled.label`
    display: flex;
    flex-direction: column;
    gap: 1px;
    color: #707070;
`;

const ModeButtons = styled.div`
    display: grid;
    grid-template-columns: 30px 35px;
    justify-content: end;

    button {
        display: grid;
        place-items: center;
        height: 24px;
        border: 1px solid #8d8d8d;
        font-size: 13px;
        background: #e4e4e4;
    }
    button + button {
        border-radius: 0 4px 4px 0;
        border-left: 0;
    }
`;

const Foldout = styled.div`
    display: flex;
    align-items: center;
    gap: 5px;
    height: 22px;
    margin-left: -15px;
`;

const VectorGrid = styled.div`
    display: grid;
    grid-template-columns: 144px repeat(3, 1fr);
    column-gap: 4px;
    align-items: center;
    ${({ $gap }) => $gap && 'margin-top: 10px;'}
`;

const AxisField = styled.label`
    display: grid;
    grid-template-columns: 12px 1fr;
    align-items: center;
    gap: 3px;
    padding-left: ${({ $wide }) => ($wide ? '0' : '4px')};
    color: #707070;
`;

const PropertyRow = styled.div`
    display: grid;
    grid-template-columns: 149px minmax(0, 1fr);
    column-gap: 3px;
    align-items: center;
    height: 22px;
    ${({ $gap }) => $gap && 'margin-top: 10px;'}
`;

const PropertyLabel = styled.label`
    overflow: hidden;
    white-space: nowrap;
    padding-left: ${({ $indent }) => ($indent ? '19px' : '0')};
    color: ${({ $muted }) => ($muted ? '#707070' : 'inherit')};
`;

const ScriptField = styled.span`
    display: flex;
    align-items: center;
    gap: 2px;
    height: 22px;
    padding: 0 4px;
    border: 1px solid #cacaca;
    border-radius: 4px;
    color: #707070;
    background: #d9d9d9;

    input {
        flex: 1;
        min-width: 0;
    }
`;

const AddComponent = styled.div`
    flex: 1;
    padding-top: 11px;
    border-top: 1px solid #7f7f7f;
    text-align: center;

    button {
        width: 286px;
        height: 29px;
        border: 1px solid #b2b2b2;
        border-bottom-color: #8d8d8d;
        border-radius: 4px;
        background: #e4e4e4;
    }
`;

const StatusBar = styled.div`
    height: 26px;
    background: #8a8a8a;
`;

/* taskbar */

const Bar = styled.footer`
    ${windowsFont}
    display: flex;
    height: 50px;
    background: linear-gradient(90deg, #38322f, #372d2b 40%, #2c2725);
    color: #fff;
`;

const StartButton = styled.button`
    display: grid;
    place-items: center;
    width: 63px;
    padding-right: 3px;
`;

const Task = styled.button`
    display: grid;
    place-items: center;
    width: 62px;
    background:
        linear-gradient(#76b9ed, #76b9ed) center bottom / ${({ $current }) => ($current ? '62px' : '51px')} 3px no-repeat
        ${({ $current }) => $current && ', #5b5452'};
    ${({ $stacked }) => $stacked && css`
        background:
            linear-gradient(90deg, transparent 5px, #76b9ed 5px 46px, #5b90b8 46px 56px, transparent 56px) center bottom / 100% 3px no-repeat;
    `}
`;

const SublimeTile = styled.span`
    display: grid;
    place-items: center;
    width: 30px;
    height: 30px;
    border-radius: 3px;
    background: #4b4b4b;
`;

const UnityTile = styled.span`
    display: grid;
    place-items: center;
    width: 30px;
    height: 30px;
    background: linear-gradient(135deg, #333, #000 60%);
`;

const Tray = styled.div`
    display: flex;
    align-items: center;
    gap: 10px;
    margin-right: 5px;
    padding-right: 25px;
    border-right: 1px solid #77716f;
`;

const Language = styled.span`
    font-size: 18px;
`;

const ImeTile = styled.span`
    width: 20px;
    height: 20px;
    margin-left: 7px;
    background: #fff;
    color: #000;
    font-size: 16px;
    line-height: 20px;
    text-align: center;
`;

const Clock = styled.span`
    display: flex;
    flex-direction: column;
    align-items: center;
    margin: 0 15px 0 14px;
    line-height: 23px;
`;

const Notice = styled.span`
    position: relative;
`;

const Badge = styled.span`
    position: absolute;
    left: 9px;
    top: 8px;
    width: 21px;
    height: 21px;
    border: 1px solid #8a8583;
    border-radius: 50%;
    background: #2f2b29;
    font-size: 14px;
    line-height: 19px;
    text-align: center;
`;
